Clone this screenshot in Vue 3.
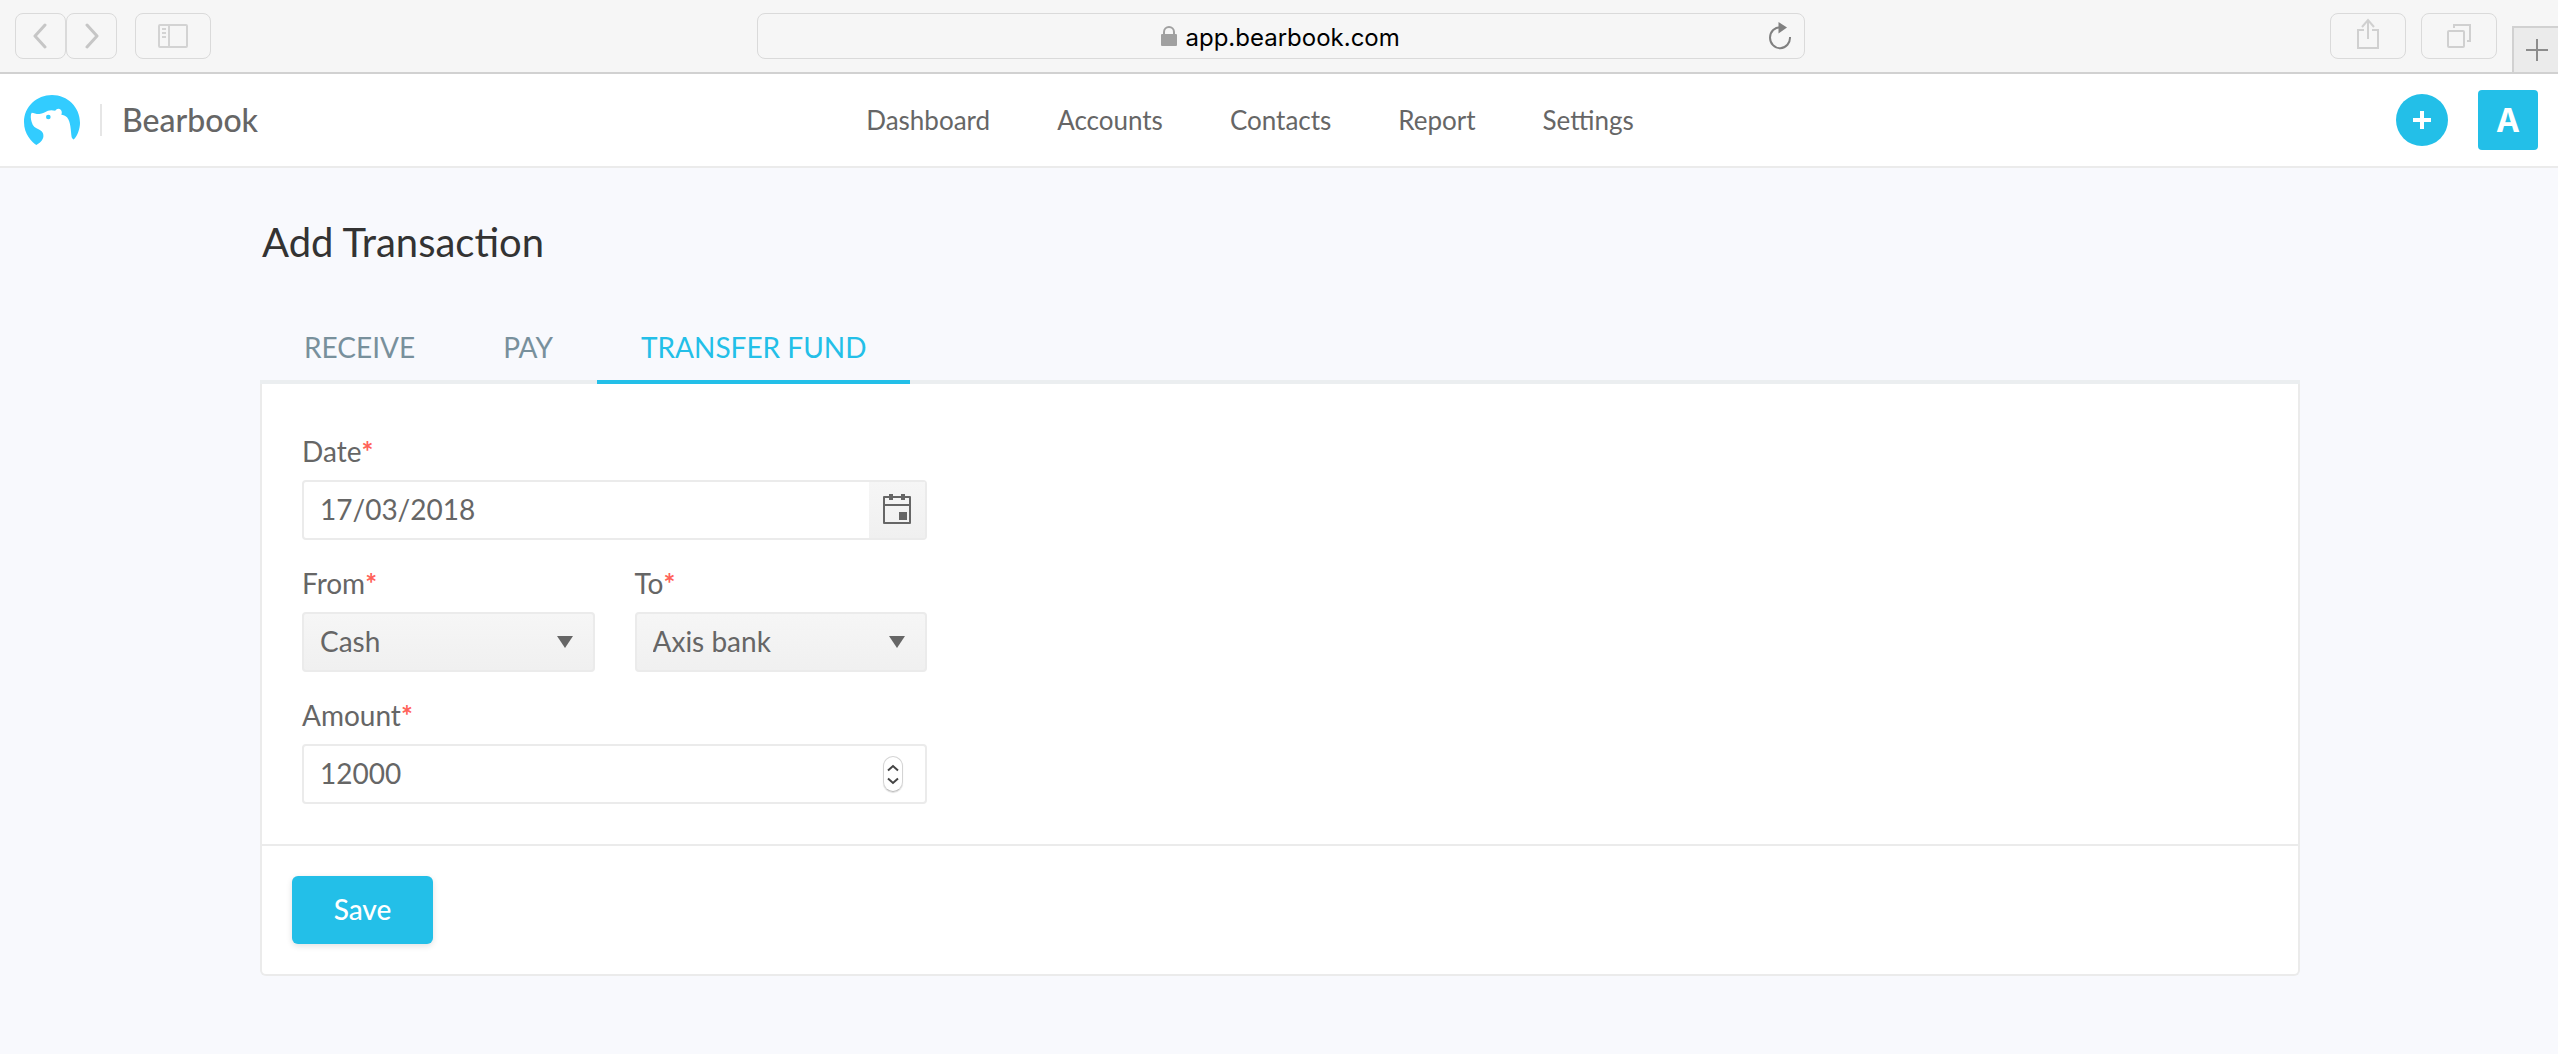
<script setup>
import { ref } from 'vue'

const links = ['Dashboard', 'Accounts', 'Contacts', 'Report', 'Settings']
const tabs = ['RECEIVE', 'PAY', 'TRANSFER FUND']
const activeTab = ref('TRANSFER FUND')
const address = ref('app.bearbook.com')
const date = ref('17/03/2018')
const from = ref('Cash')
const to = ref('Axis bank')
const amount = ref(12000)
</script>

<template>
  <div class="window">
    <div class="toolbar">
      <div class="tools">
        <div class="pair">
          <button class="tool" type="button" aria-label="Back">
            <svg width="16" height="26" viewBox="0 0 16 26" fill="none" stroke="#c6c6c6" stroke-width="3" stroke-linecap="round" stroke-linejoin="round"><path d="M12 2L2 13l10 11" /></svg>
          </button>
          <button class="tool" type="button" aria-label="Forward">
            <svg width="14" height="26" viewBox="0 0 14 26" fill="none" stroke="#c6c6c6" stroke-width="3" stroke-linecap="round" stroke-linejoin="round"><path d="M2 2l10 11L2 24" /></svg>
          </button>
        </div>
        <button class="tool wide" type="button" aria-label="Show sidebar">
          <svg width="30" height="24" viewBox="0 0 30 24" fill="none" stroke="#d3d3d3" stroke-width="2"><rect x="1" y="1" width="28" height="22" rx="1" /><path d="M11 1v22M4 5h4M4 9h4M4 13h4" /></svg>
        </button>
      </div>
      <div class="address">
        <label class="site">
          <svg width="16" height="20" viewBox="0 0 16 20"><path d="M3 9V6a5 5 0 0 1 10 0v3" fill="none" stroke="#a0a0a0" stroke-width="2" /><rect x="0" y="8" width="16" height="12" rx="1" fill="#a0a0a0" /></svg>
          <input v-model="address" class="url" type="text" aria-label="Address" />
        </label>
        <button class="reload" type="button" aria-label="Reload">
          <svg width="24" height="28" viewBox="0 0 24 28"><path d="M12.500 5.200A10 10.500 0 1 0 22 15" fill="none" stroke="#808080" stroke-width="2" /><path d="M10.500 0v11.500l8.500-6z" fill="#808080" /></svg>
        </button>
      </div>
      <div class="tools end">
        <button class="tool wide" type="button" aria-label="Share">
          <svg class="lift" width="24" height="32" viewBox="0 0 24 32" fill="none" stroke="#d0d0d0" stroke-width="2"><path d="M8 12H2v18h20V12h-6M12 21V3M6 9l6-7 6 7" /></svg>
        </button>
        <button class="tool wide" type="button" aria-label="Show tabs">
          <svg width="24" height="24" viewBox="0 0 24 24" fill="none" stroke="#d0d0d0" stroke-width="2"><rect x="1" y="7" width="16" height="16" rx="1" /><path d="M7 4V1h16v16h-3" /></svg>
        </button>
        <button class="new-tab" type="button" aria-label="New tab">
          <svg width="22" height="22" viewBox="0 0 22 22" stroke="#8c8c8c" stroke-width="2"><path d="M11 0v22M0 11h22" /></svg>
        </button>
      </div>
    </div>

    <header class="header">
      <a class="brand" href="#">
        <svg width="56" height="50" viewBox="72 285 168 150"><path fill="#32ccff" d="M109 435C96 426 72 404 72 366C72 320 110 285 156 285C203 285 240 322 240 368C240 386 233 406 222 418Q218 419 215 412C212 394 213 366 201 352C196 346 190 345 184 344C188 336 184 327 176 326C170 326 167 329 166 332C158 330 150 330 144 332C136 336 128 341 118 342C110 343 102 338 95 338C91 344 92 356 95 366C98 378 106 384 114 387C126 392 132 400 130 411C128 422 118 430 109 435Z" /><circle cx="145" cy="351" r="7" fill="#32ccff" /></svg>
        <span class="name">Bearbook</span>
      </a>
      <nav class="nav">
        <a v-for="link in links" :key="link" href="#">{{ link }}</a>
      </nav>
      <div class="actions">
        <button class="add" type="button" aria-label="Add">
          <svg width="18" height="18" viewBox="0 0 18 18" stroke="#fff" stroke-width="4"><path d="M9 0v18M0 9h18" /></svg>
        </button>
        <button class="avatar" type="button">A</button>
      </div>
    </header>

    <main class="page">
      <h1>Add Transaction</h1>
      <div class="tabs" role="tablist">
        <button
          v-for="tab in tabs"
          :key="tab"
          type="button"
          role="tab"
          :class="['tab', { active: tab === activeTab }]"
          :aria-selected="tab === activeTab"
          @click="activeTab = tab"
        >{{ tab }}</button>
      </div>
      <form class="card" @submit.prevent>
        <div class="fields">
          <div class="field">
            <label for="date">Date<span class="star">*</span></label>
            <div class="box">
              <input id="date" v-model="date" type="text" />
              <button class="calendar" type="button" aria-label="Pick a date">
                <svg width="28" height="30" viewBox="0 0 28 30"><path d="M1 3h26v26H1zM1 11h26" fill="none" stroke="#666" stroke-width="2" stroke-linejoin="round" /><path d="M6 0h4v6H6zM18 0h4v6h-4zM16 18h8v8h-8z" fill="#666" /></svg>
              </button>
            </div>
          </div>
          <div class="row">
            <div class="field">
              <label for="from">From<span class="star">*</span></label>
              <div class="box shaded">
                <select id="from" v-model="from"><option>Cash</option><option>Axis bank</option></select>
                <svg class="arrow" width="16" height="12" viewBox="0 0 16 12"><path d="M0 0h16L8 12z" fill="#666" /></svg>
              </div>
            </div>
            <div class="field">
              <label for="to">To<span class="star">*</span></label>
              <div class="box shaded">
                <select id="to" v-model="to"><option>Axis bank</option><option>Cash</option></select>
                <svg class="arrow" width="16" height="12" viewBox="0 0 16 12"><path d="M0 0h16L8 12z" fill="#666" /></svg>
              </div>
            </div>
          </div>
          <div class="field">
            <label for="amount">Amount<span class="star">*</span></label>
            <div class="box">
              <input id="amount" v-model="amount" type="number" />
              <div class="stepper">
                <button type="button" aria-label="Increase" @click="amount++">
                  <svg width="12" height="8" viewBox="0 0 12 8" fill="none" stroke="#444" stroke-width="2"><path d="M1 6.500l5-4.500 5 4.500" /></svg>
                </button>
                <button type="button" aria-label="Decrease" @click="amount--">
                  <svg width="12" height="8" viewBox="0 0 12 8" fill="none" stroke="#444" stroke-width="2"><path d="M1 1.500L6 6l5-4.500" /></svg>
                </button>
              </div>
            </div>
          </div>
        </div>
        <div class="footer">
          <button class="save" type="submit">Save</button>
        </div>
      </form>
    </main>
  </div>
</template>

<style>
body {
  margin: 0;
  background: #f8f9fd;
}
</style>

<style scoped>
* {
  box-sizing: border-box;
}
.window {
  font-family: Lato, sans-serif;
  font-size: 28px;
  color: #666;
}
button,
input,
select {
  margin: 0;
  padding: 0;
  border: 0;
  background: none;
  font: inherit;
  color: inherit;
}
button {
  display: flex;
  align-items: center;
  justify-content: center;
}
svg {
  display: block;
  flex: none;
}
a {
  color: inherit;
  text-decoration: none;
}
.toolbar {
  display: grid;
  grid-template-columns: 1fr 41% 1fr;
  height: 74px;
  padding-left: 4px;
  background: #f6f6f6;
  border-bottom: 2px solid #d1d1d1;
}
.tools {
  display: flex;
  gap: 18px;
  padding: 13px 0 13px 11px;
}
.pair {
  display: flex;
}
.tool {
  width: 51px;
  height: 46px;
  border: 1px solid #dadada;
  border-radius: 8px;
}
.wide {
  width: 76px;
}
.lift {
  margin-bottom: 4px;
}
.end {
  justify-content: flex-end;
  gap: 15px;
  padding: 13px 0 0;
}
.new-tab {
  align-self: flex-end;
  width: 46px;
  height: 46px;
  padding-left: 2px;
  background: #ebebeb;
  border: solid #d1d1d1;
  border-width: 2px 0 0 2px;
}
.address {
  display: grid;
  grid-template-columns: 1fr auto 1fr;
  align-items: center;
  height: 46px;
  margin-top: 13px;
  padding: 0 12px;
  border: 1px solid #dadada;
  border-radius: 8px;
}
.site {
  grid-column: 2;
  display: flex;
  align-items: center;
  gap: 9px;
}
.url {
  width: 216px;
  padding-top: 2px;
  font-family: Inter, sans-serif;
  font-size: 24px;
  color: #000;
}
.reload {
  justify-self: end;
}
.header {
  display: grid;
  grid-template-columns: 1fr auto 1fr;
  align-items: center;
  height: 94px;
  padding: 0 20px 0 24px;
  background: #fff;
  border-bottom: 2px solid #ebebeb;
}
.brand {
  display: flex;
  align-items: center;
  gap: 20px;
}
.name {
  padding-left: 20px;
  border-left: 2px solid #e6e6e6;
  font-size: 32px;
  line-height: 32px;
  font-weight: 500;
}
.nav {
  display: flex;
  gap: 67px;
  padding-right: 62px;
  font-size: 26px;
}
.actions {
  display: flex;
  align-items: center;
  justify-content: flex-end;
  gap: 30px;
}
.add {
  width: 52px;
  height: 52px;
  border-radius: 50%;
  background: #23bfe8;
}
.avatar {
  width: 60px;
  height: 60px;
  border-radius: 4px;
  background: #23bfe8;
  color: #fff;
  font-family: Inter, sans-serif;
  font-size: 32px;
  font-weight: 700;
}
.page {
  padding: 48px 258px 48px 260px;
}
h1 {
  margin: 0;
  padding-left: 2px;
  font-size: 40px;
  line-height: 52px;
  font-weight: 400;
  color: #333;
}
.tabs {
  display: flex;
  margin-top: 46px;
  box-shadow: inset 0 -4px #ebeef0;
}
.tab {
  height: 70px;
  padding: 0 44px;
  border-bottom: 4px solid transparent;
  color: #78909c;
}
.active {
  border-color: #23bfe8;
  color: #23bfe8;
}
.card {
  background: #fff;
  border: 2px solid #ebebeb;
  border-top: 0;
  border-radius: 0 0 6px 6px;
}
.fields {
  display: flex;
  flex-direction: column;
  gap: 24px;
  width: 705px;
  max-width: 100%;
  padding: 48px 40px 40px;
}
.row {
  display: grid;
  grid-template-columns: 1fr 1fr;
  gap: 40px;
}
.field label {
  display: block;
  height: 48px;
  line-height: 38px;
}
.star {
  color: #ff6259;
  font-weight: 700;
}
.box {
  position: relative;
  display: flex;
  align-items: center;
  height: 60px;
  border: 2px solid #ebebeb;
  border-radius: 4px;
}
.shaded {
  background: linear-gradient(#f6f6f6, #f0f0f0);
}
.box input,
.box select {
  flex: 1;
  min-width: 0;
  height: 100%;
  padding: 0 16px 2px;
  appearance: none;
}
.box input[type='number'] {
  appearance: textfield;
}
.calendar {
  width: 56px;
  height: 100%;
  padding-bottom: 2px;
  background: linear-gradient(#f6f6f6, #f0f0f0);
}
.arrow {
  position: absolute;
  right: 20px;
  pointer-events: none;
}
.stepper {
  display: flex;
  flex-direction: column;
  justify-content: space-around;
  align-items: center;
  width: 20px;
  height: 36px;
  margin-right: 22px;
  padding: 4px 0;
  border: 1px solid #d4d4d4;
  border-bottom-color: #bbb;
  border-radius: 10px;
  box-shadow: 0 1px 1px #ddd;
}
.footer {
  padding: 30px;
  border-top: 2px solid #ebebeb;
}
.save {
  width: 141px;
  height: 68px;
  padding-bottom: 2px;
  border-radius: 6px;
  background: #23bfe8;
  box-shadow: 0 2px 6px rgba(0, 0, 0, 0.12);
  color: #fff;
  font-weight: 500;
}
</style>
